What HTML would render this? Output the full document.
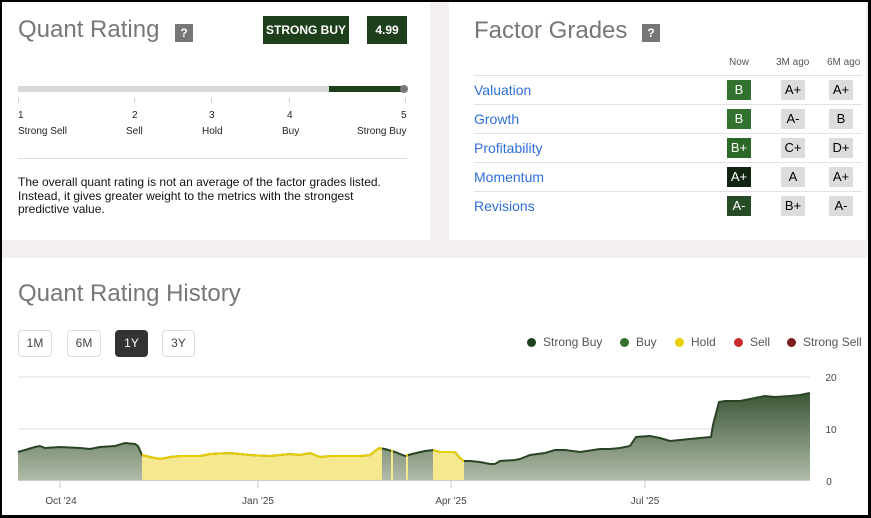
<!DOCTYPE html>
<html><head><meta charset="utf-8"><style>
*{margin:0;padding:0;box-sizing:border-box}
body{width:871px;height:518px;background:#000;position:relative;overflow:hidden;font-family:"Liberation Sans",Arial,sans-serif}
.bg{position:absolute;left:2px;top:2px;width:866px;height:513px;background:#f3f0ef}
.p{position:absolute;background:#fff}
.abs{position:absolute}
.q{position:absolute;width:18px;height:18px;background:#777;color:#fff;font-size:12px;font-weight:bold;text-align:center;line-height:18px}
.g{position:absolute;width:24px;height:20px;font-size:13px;text-align:center;line-height:20px}
.lbl{position:absolute;font-size:14px;color:#2f6fd8}
.rl{position:absolute;left:474px;width:388px;height:1px;background:#e2e2e2}
.btn{position:absolute;top:330px;height:27px;border:1px solid #ddd;border-radius:4px;font-size:12px;color:#444;text-align:center;line-height:25px}
.lg{position:absolute;top:335px;font-size:12px;color:#555;white-space:nowrap}
.dot{display:inline-block;width:9px;height:9px;border-radius:50%;margin-right:7px;vertical-align:-1px}
</style></head><body>
<div class="bg"></div>
<div class="p" style="left:2px;top:2px;width:428px;height:238px"></div>
<div class="p" style="left:449px;top:2px;width:417px;height:238px"></div>
<div class="p" style="left:2px;top:258px;width:866px;height:257px"></div>

<div class="abs" style="left:18px;top:16px;font-size:24px;color:#777">Quant Rating</div>
<div class="q" style="left:175px;top:24px">?</div>
<div class="abs" style="left:263px;top:16px;width:86px;height:28px;background:#1e3f1c;color:#fff;font-size:12px;font-weight:bold;text-align:center;line-height:28px">STRONG BUY</div>
<div class="abs" style="left:367px;top:16px;width:40px;height:28px;background:#1e3f1c;color:#fff;font-size:12px;font-weight:bold;text-align:center;line-height:28px">4.99</div>
<div class="abs" style="left:18px;top:86px;width:386px;height:6px;background:#d8d8d8"></div>
<div class="abs" style="left:329px;top:86px;width:73px;height:6px;background:#1e3f1c"></div>
<div class="abs" style="left:400px;top:85px;width:8px;height:8px;border-radius:50%;background:#777"></div>
<div class="abs" style="left:18px;top:98px;width:1px;height:5px;background:#ccc"></div>
<div class="abs" style="left:134px;top:98px;width:1px;height:5px;background:#ccc"></div>
<div class="abs" style="left:211px;top:98px;width:1px;height:5px;background:#ccc"></div>
<div class="abs" style="left:289px;top:98px;width:1px;height:5px;background:#ccc"></div>
<div class="abs" style="left:405px;top:98px;width:1px;height:5px;background:#ccc"></div>
<div class="abs" style="font-size:10px;color:#222;top:110px;left:18px">1</div>
<div class="abs" style="font-size:10px;color:#222;top:110px;left:132px">2</div>
<div class="abs" style="font-size:10px;color:#222;top:110px;left:209px">3</div>
<div class="abs" style="font-size:10px;color:#222;top:110px;left:287px">4</div>
<div class="abs" style="font-size:10px;color:#222;top:110px;left:401px">5</div>
<div class="abs" style="font-size:10px;color:#222;top:126px;left:18px">Strong Sell</div>
<div class="abs" style="font-size:10px;color:#222;top:126px;left:126px">Sell</div>
<div class="abs" style="font-size:10px;color:#222;top:126px;left:202px">Hold</div>
<div class="abs" style="font-size:10px;color:#222;top:126px;left:282px">Buy</div>
<div class="abs" style="font-size:10px;color:#222;top:126px;left:357px">Strong Buy</div>
<div class="abs" style="left:18px;top:158px;width:389px;height:1px;background:#ddd"></div>
<div class="abs" style="left:18px;top:176px;width:380px;font-size:12px;line-height:13.5px;color:#111">The overall quant rating is not an average of the factor grades listed. Instead, it gives greater weight to the metrics with the strongest predictive value.</div>

<div class="abs" style="left:474px;top:17px;font-size:24px;color:#777">Factor Grades</div>
<div class="q" style="left:642px;top:24px">?</div>
<div class="abs" style="top:57px;left:729px;font-size:10px;color:#555">Now</div>
<div class="abs" style="top:57px;left:776px;font-size:10px;color:#555">3M ago</div>
<div class="abs" style="top:57px;left:827px;font-size:10px;color:#555">6M ago</div>
<div class="rl" style="top:75px"></div><div class="rl" style="top:104px"></div><div class="rl" style="top:133px"></div><div class="rl" style="top:162px"></div><div class="rl" style="top:191px"></div>
<div class="lbl" style="left:474px;top:82px">Valuation</div>
<div class="lbl" style="left:474px;top:111px">Growth</div>
<div class="lbl" style="left:474px;top:140px">Profitability</div>
<div class="lbl" style="left:474px;top:169px">Momentum</div>
<div class="lbl" style="left:474px;top:198px">Revisions</div>
<div class="g" style="left:727px;top:80px;background:#33722e;color:#fff">B</div>
<div class="g" style="left:781px;top:80px;background:#dcdcdc">A+</div>
<div class="g" style="left:829px;top:80px;background:#dcdcdc">A+</div>
<div class="g" style="left:727px;top:109px;background:#33722e;color:#fff">B</div>
<div class="g" style="left:781px;top:109px;background:#dcdcdc">A-</div>
<div class="g" style="left:829px;top:109px;background:#dcdcdc">B</div>
<div class="g" style="left:727px;top:138px;background:#2b6a26;color:#fff">B+</div>
<div class="g" style="left:781px;top:138px;background:#dcdcdc">C+</div>
<div class="g" style="left:829px;top:138px;background:#dcdcdc">D+</div>
<div class="g" style="left:727px;top:167px;background:#0f2510;color:#fff">A+</div>
<div class="g" style="left:781px;top:167px;background:#dcdcdc">A</div>
<div class="g" style="left:829px;top:167px;background:#dcdcdc">A+</div>
<div class="g" style="left:727px;top:196px;background:#264c25;color:#fff">A-</div>
<div class="g" style="left:781px;top:196px;background:#dcdcdc">B+</div>
<div class="g" style="left:829px;top:196px;background:#dcdcdc">A-</div>

<div class="abs" style="left:18px;top:280px;font-size:24px;color:#777">Quant Rating History</div>
<div class="btn" style="left:18px;width:34px">1M</div>
<div class="btn" style="left:67px;width:34px">6M</div>
<div class="btn" style="left:115px;width:33px;background:#333;color:#fff;border-color:#333">1Y</div>
<div class="btn" style="left:162px;width:33px">3Y</div>
<div class="lg" style="left:527px"><span class="dot" style="background:#1e3f1c"></span>Strong Buy</div>
<div class="lg" style="left:620px"><span class="dot" style="background:#33722e"></span>Buy</div>
<div class="lg" style="left:675px"><span class="dot" style="background:#e8d000"></span>Hold</div>
<div class="lg" style="left:734px"><span class="dot" style="background:#c92a2a"></span>Sell</div>
<div class="lg" style="left:787px"><span class="dot" style="background:#7a1e1e"></span>Strong Sell</div>

<svg class="abs" style="left:0;top:0" width="871" height="518">
<defs>
<linearGradient id="gg" x1="0" y1="393" x2="0" y2="480" gradientUnits="userSpaceOnUse"><stop offset="0" stop-color="#3b5636"/><stop offset="1" stop-color="#b0bba8"/></linearGradient>
<clipPath id="area"><polygon points="18,480 18,452 25,450 35,447 40,446 45,448 60,447 80,448 90,449 100,447 115,446 125,443 135,444 138,446 142,455 150,457 160,459 170,457 180,456 200,456 210,454 230,453 250,455 270,456 290,454 300,455 310,453 320,457 330,456 360,456 370,455 375,451 379,448 385,449 395,452 405,456 412,454 425,451 433,450 440,452 455,452 460,458 464,461 470,461 480,462 490,464 495,464 500,461 515,460 520,459 530,455 545,453 555,450 565,450 580,452 600,449 610,449 620,448 630,446 636,437 650,436 660,438 670,441 680,440 690,439 700,438 711,437 713,425 719,402 725,401 740,401 750,399 765,396 775,397 790,396 800,395 810,393 810,480"/></clipPath>
<clipPath id="yel"><rect x="142" y="0" width="240" height="518"/><rect x="391" y="0" width="2" height="518"/><rect x="406" y="0" width="2" height="518"/><rect x="433" y="0" width="31" height="518"/></clipPath>
</defs>
<line x1="18" y1="377" x2="810" y2="377" stroke="#ddd"/>
<line x1="18" y1="429" x2="810" y2="429" stroke="#ddd"/>
<line x1="18" y1="480.5" x2="810" y2="480.5" stroke="#ccc"/>
<rect x="18" y="380" width="792" height="100" fill="url(#gg)" clip-path="url(#area)"/>
<g clip-path="url(#yel)"><rect x="18" y="380" width="792" height="100" fill="#f6e88e" clip-path="url(#area)"/></g>
<polyline fill="none" stroke="#2a4426" stroke-width="2" points="18,452 25,450 35,447 40,446 45,448 60,447 80,448 90,449 100,447 115,446 125,443 135,444 138,446 142,455 150,457 160,459 170,457 180,456 200,456 210,454 230,453 250,455 270,456 290,454 300,455 310,453 320,457 330,456 360,456 370,455 375,451 379,448 385,449 395,452 405,456 412,454 425,451 433,450 440,452 455,452 460,458 464,461 470,461 480,462 490,464 495,464 500,461 515,460 520,459 530,455 545,453 555,450 565,450 580,452 600,449 610,449 620,448 630,446 636,437 650,436 660,438 670,441 680,440 690,439 700,438 711,437 713,425 719,402 725,401 740,401 750,399 765,396 775,397 790,396 800,395 810,393"/>
<g clip-path="url(#yel)"><polyline fill="none" stroke="#e8d000" stroke-width="2" points="138,446 142,455 150,457 160,459 170,457 180,456 200,456 210,454 230,453 250,455 270,456 290,454 300,455 310,453 320,457 330,456 360,456 370,455 375,451 379,448 385,449 395,452 405,456 412,454 425,451 433,450 440,452 455,452 460,458 464,461 470,461"/></g>
<g stroke="#ccc"><line x1="60" y1="481" x2="60" y2="488"/><line x1="258" y1="481" x2="258" y2="488"/><line x1="451" y1="481" x2="451" y2="488"/><line x1="645" y1="481" x2="645" y2="488"/></g>
<g font-family="Liberation Sans,sans-serif" font-size="10" fill="#444" text-anchor="middle">
<text x="61" y="504">Oct '24</text><text x="258" y="504">Jan '25</text><text x="451" y="504">Apr '25</text><text x="645" y="504">Jul '25</text>
<text x="831" y="381">20</text><text x="831" y="433">10</text><text x="829" y="485">0</text></g>
</svg>
</body></html>
